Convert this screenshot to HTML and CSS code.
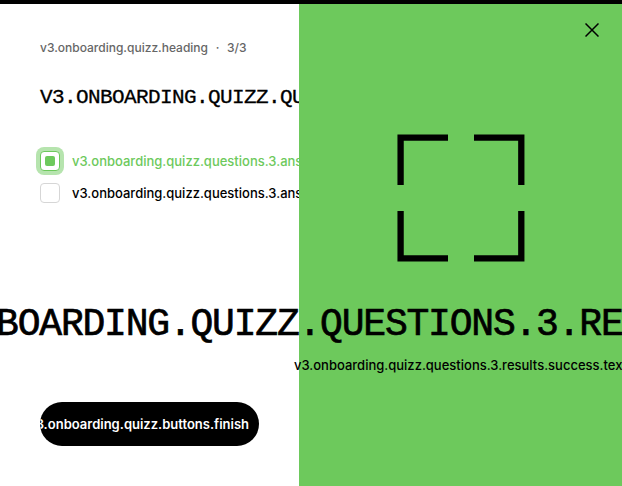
FILE: index.html
```html
<!DOCTYPE html>
<html lang="en">
<head>
<meta charset="utf-8">
<title>Onboarding quiz</title>
<link rel="stylesheet" href="styles.css">
</head>
<body>
<main class="quiz">
  <section class="panel">
    <p class="step"><span>v3.onboarding.quizz.heading</span><span class="dot">·</span><span>3/3</span></p>
    <h1 class="question">v3.onboarding.quizz.questions.3.title</h1>
    <div class="answers">
      <div class="answer selected"><span class="box"></span><span>v3.onboarding.quizz.questions.3.answers.1</span></div>
      <div class="answer"><span class="box"></span><span>v3.onboarding.quizz.questions.3.answers.2</span></div>
    </div>
    <button class="finish"><span class="track"><span>v3.onboarding.quizz.buttons.finish</span><span>v3.onboarding.quizz.buttons.finish</span></span></button>
  </section>
  <section class="result">
    <svg class="close" viewBox="0 0 14 14" fill="none" stroke="#000" stroke-width="1.5"><path d="M.5.5l13 13M13.5.5l-13 13"/></svg>
    <svg class="frame" viewBox="0 0 128 128" fill="none" stroke="#000" stroke-width="6.3"><path d="M51 3.6H3.6V51M77 3.6h47.3V51M3.6 77v47.3H51M77 124.3h47.3V77"/></svg>
    <h2 class="title">v3.onboarding.quizz.questions.3.results.success.title</h2>
    <p class="text">v3.onboarding.quizz.questions.3.results.success.text</p>
  </section>
</main>
</body>
</html>
```

FILE: styles.css
```css
* { box-sizing: border-box; }
body { margin: 0; overflow: hidden; background: #fff; color: #000; font-family: Inter, sans-serif; font-size: 13px; font-weight: 500; }
h1, h2, p { margin: 0; white-space: nowrap; }
.quiz { display: grid; grid-template-columns: 299px 323px; height: 486px; border-top: 4px solid #000; }
.panel { display: flex; flex-direction: column; min-width: 0; overflow: hidden; padding: 34px 40px 40px; }
.step { display: flex; height: 20px; line-height: 20px; font-size: 12px; color: #666; }
.dot { width: 19px; text-align: center; }
.question, .title { font-family: "Liberation Mono", monospace; font-weight: 400; text-transform: uppercase; }
.question { margin-top: 26px; height: 28px; line-height: 28px; font-size: 21px; letter-spacing: -0.6px; -webkit-text-stroke: 0.3px #000; }
.answers { display: flex; flex-direction: column; gap: 12px; margin-top: 39px; }
.answer { display: flex; align-items: center; gap: 12px; height: 20px; line-height: 20px; white-space: nowrap; }
.box { display: flex; flex: none; align-items: center; justify-content: center; width: 20px; height: 20px; border: 1px solid #d6d6d6; border-radius: 4px; background: #fff; }
.selected { color: #6dc95c; }
.selected .box { border-color: #6dc95c; box-shadow: 0 0 0 4px #b6e4ae; }
.selected .box::before { content: ""; width: 10px; height: 10px; border-radius: 2px; background: #6dc95c; }
.finish { display: flex; align-items: center; flex: none; width: 219px; height: 44px; margin-top: auto; padding: 0; border: 0; border-radius: 22px; overflow: hidden; background: #000; color: #fff; font: 600 13px/20px Inter, sans-serif; }
.track { display: flex; gap: 12px; margin-left: -12px; white-space: nowrap; }
.result { position: relative; display: flex; flex-direction: column; align-items: center; background: #6dc95c; }
.close { position: absolute; top: 19px; right: 23px; width: 14px; height: 14px; }
.frame { flex: none; width: 128px; height: 128px; margin-top: 130px; }
.title { margin-top: 41px; height: 44px; line-height: 44px; font-size: 38px; letter-spacing: -1.204px; -webkit-text-stroke: 0.7px #000; }
.text { margin-top: 8px; line-height: 20px; }
```
